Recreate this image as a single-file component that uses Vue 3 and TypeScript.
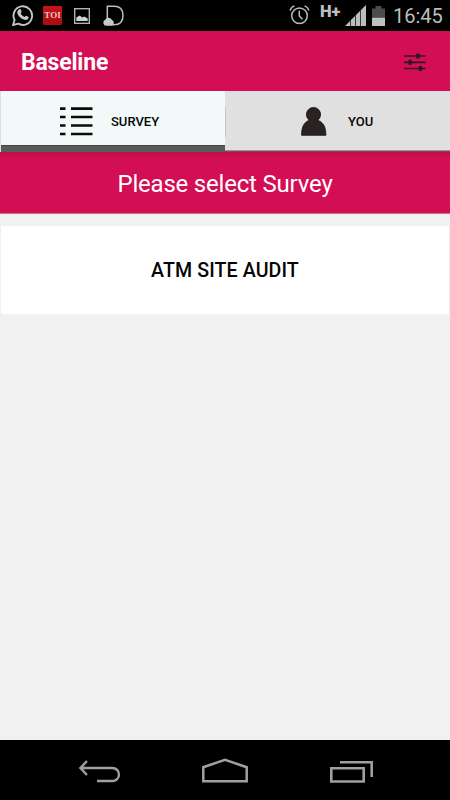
<script setup lang="ts">
import { ref } from 'vue'

type TabId = 'survey' | 'you'

const activeTab = ref<TabId>('survey')
const surveys: string[] = ['ATM SITE AUDIT']
</script>

<template>
  <div class="screen">
    <header class="status">
      <div class="notifications">
        <svg width="24" height="24" viewBox="0 0 24 24">
          <path d="M2 22.2 3.6 17A9.3 9.3 0 1 1 7.2 20.7Z" fill="none" stroke="#c4c4c4" stroke-width="1.9" stroke-linejoin="round" />
          <path d="M8.3 6.3c.7-.5 1.3-.2 1.6.5l.7 1.8c.2.6-.7 1.3-1 1.7.9 1.8 2.1 2.9 4 3.7.5-.5 1-1.5 1.6-1.3l2 1c.6.3.5.6.3 1.3-.5 1.6-2.3 2.3-4 1.8-3.800-1.100-6.100-3.500-7.100-6.300-.6-1.700.5-3.500 1.900-4.200Z" fill="#c8c8c8" />
        </svg>
        <span class="toi">TOI</span>
        <svg class="picture" width="16" height="16" viewBox="0 0 16 16">
          <rect x=".7" y=".7" width="14.600" height="14.600" fill="none" stroke="#bdbdbd" stroke-width="1.300" />
          <path d="M2.300 13V9.500L5.700 7.500l2.600 2 2-1 3.400 2v2.500Z" fill="#cfcfcf" />
        </svg>
        <svg class="dee" width="22" height="22" viewBox="0 0 22 22">
          <path d="M4.300 14V1.300H11C17.200 1.300 20 5 20 10.500S17.200 19.800 11 19.800H8" fill="none" stroke="#bdbdbd" stroke-width="1.500" />
          <path d="M3.300 20.800a3.200 3.200 0 0 1-1.100-6.100 3.800 3.800 0 0 1 6.800.4 3 3 0 0 1-.6 5.700Z" fill="#c8c8c8" />
        </svg>
      </div>
      <div class="system">
        <svg class="alarm" width="22" height="20" viewBox="0 0 22 20">
          <g fill="none" stroke="#bababa" stroke-width="1.500">
            <circle cx="10.500" cy="10.700" r="7.800" />
            <path d="M10.300 5.700v5.200l3.200 3.300M1 5.500Q2 2.200 5.400.9M15.600.9Q19 2.200 20 5.500" />
          </g>
        </svg>
        <span class="network">H+</span>
        <svg class="signal" width="22" height="21" viewBox="0 0 22 21">
          <path d="M0 21 5 16v5ZM5.700 21v-5.700l4.300-4.300v10ZM10.700 21V10.300l4.300-4.300v15ZM15.700 21V5.300l5.300-5.300v21Z" fill="#bdbdbd" />
        </svg>
        <svg class="battery" width="13" height="20" viewBox="0 0 13 20">
          <path d="M0 2.500h3.500V0h6v2.500H13V12H0Z" fill="#4c4c4c" />
          <path d="M0 11.800h13V20H0Z" fill="#c0c0c0" />
        </svg>
        <time class="clock">16:45</time>
      </div>
    </header>

    <div class="appbar">
      <h1>Baseline</h1>
      <svg width="22" height="20" viewBox="0 0 22 20">
        <path d="M0 4h21.500M0 10.300h21.500M0 16.500h21.500" stroke="#331420" stroke-width="1.700" />
        <path d="M12.500 1.500h3.200v5h-3.200ZM4.500 7.800h3.200v5H4.500ZM14.800 14H18v5h-3.200Z" fill="#221c20" />
      </svg>
    </div>

    <nav class="tabs">
      <button class="tab survey" :class="{ active: activeTab === 'survey' }" @click="activeTab = 'survey'">
        <svg width="33" height="29" viewBox="0 0 33 29">
          <path d="M0 1.600h5.500M11 1.600h21.500M0 10h5.500M11 10h21.500M0 18.500h5.500M11 18.500h21.500M0 27h5.500M11 27h21.500" stroke="#080c0b" stroke-width="2.600" />
        </svg>
        <span>SURVEY</span>
      </button>
      <span class="divider"></span>
      <button class="tab you" :class="{ active: activeTab === 'you' }" @click="activeTab = 'you'">
        <svg width="26" height="30" viewBox="0 0 26 30">
          <path d="M.6 29.300C.6 20.500 3 16.500 8.200 14.200A7.100 7.100 0 1 1 16.800 14.200C22.300 16.500 24.900 20.500 24.900 29.300Z" fill="#292122" stroke="#171112" stroke-width=".8" />
        </svg>
        <span>YOU</span>
      </button>
    </nav>

    <h2 class="banner">Please select Survey</h2>

    <main class="list">
      <button v-for="survey in surveys" :key="survey" class="card">{{ survey }}</button>
    </main>

    <footer class="navbar">
      <svg width="42" height="23" viewBox="0 0 42 23">
        <path d="M8 1 1.500 8 8 15M1.500 8H33.500a6.500 6.500 0 0 1 0 13H18" fill="none" stroke="#a0a0a0" stroke-width="2.400" />
      </svg>
      <svg class="home" width="46" height="25" viewBox="0 0 46 25">
        <path d="M1.300 23.300V9.200L23 1.700 44.700 9.200v14.100Z" fill="none" stroke="#a0a0a0" stroke-width="2.500" />
      </svg>
      <svg width="43" height="22" viewBox="0 0 43 22">
        <path d="M1.300 7.300h32.400v13.200H1.300ZM10 1.300h31.700V16" fill="none" stroke="#a0a0a0" stroke-width="2.600" />
      </svg>
    </footer>
  </div>
</template>

<style>
body {
  background: #f1f1f1;
}
</style>

<style scoped>
.screen {
  display: flex;
  flex-direction: column;
  width: 450px;
  height: 800px;
  overflow: hidden;
  background: #f1f1f1;
  font-family: Roboto, "Liberation Sans", sans-serif;
}

svg {
  display: block;
  flex: none;
}

button {
  margin: 0;
  padding: 0;
  border: 0;
  font-family: inherit;
  color: #050505;
}

h1,
h2 {
  margin: 0;
}

.status {
  display: flex;
  justify-content: space-between;
  flex: none;
  height: 31px;
  background: #000;
}

.notifications,
.system {
  display: flex;
  align-items: center;
}

.notifications {
  padding: 0 0 1px 11px;
}

.toi {
  width: 19px;
  margin-left: 8px;
  background: linear-gradient(#c91419, #a80b10);
  border-radius: 1px;
  color: #e6c9c9;
  font: bold 9px/19px "Liberation Serif", serif;
  text-align: center;
}

.picture {
  margin: 1px 0 0 12px;
}

.dee {
  margin: 1px 0 0 12.5px;
}

.system {
  padding-right: 7px;
}

.alarm {
  margin: 0 0 1px;
}

.network {
  width: 22px;
  margin-left: 9px;
  padding-bottom: 7px;
  color: #bdbdbd;
  font-size: 16.5px;
  font-weight: 900;
  line-height: 18px;
}

.signal {
  margin: 0 0 1px 3px;
}

.battery {
  margin-left: 5px;
}

.clock {
  width: 50px;
  margin-left: 8px;
  padding-top: 1px;
  color: #bdbdbd;
  font-size: 20px;
  line-height: 31px;
  white-space: nowrap;
}

.appbar {
  display: flex;
  align-items: center;
  justify-content: space-between;
  flex: none;
  height: 60px;
  padding: 2px 24px 0 21px;
  box-sizing: border-box;
  background: #d30e54;
}

.appbar h1 {
  color: #fff;
  font-size: 23px;
  font-weight: 700;
  letter-spacing: -0.2px;
  line-height: 58px;
  padding-top: 2px;
}

.tabs {
  display: flex;
  align-items: center;
  flex: none;
  height: 61px;
}

.tab {
  display: flex;
  align-items: center;
  width: 225px;
  height: 61px;
  box-sizing: border-box;
  background: #e0e0e0;
  box-shadow: inset 0 -1px #a33459, inset 0 -2px #999;
  font-size: 13px;
  font-weight: 500;
}

.tab.active {
  background: #f1faf9;
  box-shadow: inset 1px 0 #dedede, inset 0 -6px #5a5a5a, inset 0 -7px #454747;
}

.divider {
  z-index: 1;
  width: 1px;
  height: 30px;
  margin-right: -1px;
  background: #c6c6c6;
}

.survey {
  gap: 18px;
  padding: 0 0 1px 60px;
}

.you {
  gap: 21px;
  padding: 0 0 1px 76px;
}

.banner {
  flex: none;
  height: 62px;
  box-sizing: border-box;
  border-bottom: 1px solid #d96a8f;
  background: linear-gradient(#bd0d4b, #d30e54 6px);
  color: #fff;
  font-size: 24px;
  font-weight: 400;
  letter-spacing: -0.2px;
  line-height: 64px;
  text-align: center;
}

.list {
  flex: 1;
  padding: 12px 1px 0;
}

.card {
  display: block;
  width: 100%;
  height: 88px;
  padding-top: 2px;
  background: #fff;
  font-size: 19.6px;
  font-weight: 500;
  letter-spacing: 0.1px;
  line-height: 86px;
}

.navbar {
  display: flex;
  align-items: center;
  justify-content: space-between;
  flex: none;
  height: 60px;
  padding: 3px 77px 0 79px;
  box-sizing: border-box;
  background: #000;
}

.home {
  margin: 0 1px 2px -1px;
}
</style>
